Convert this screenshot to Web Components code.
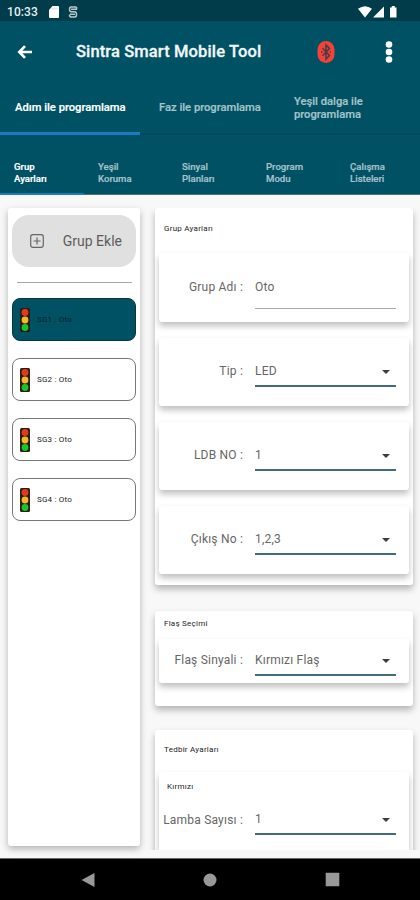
<!DOCTYPE html>
<html lang="tr">
<head>
<meta charset="UTF-8">
<meta name="viewport" content="width=device-width, initial-scale=1.0">
<title>Sintra Smart Mobile Tool</title>
<style>
    body {
        margin: 0;
        width: 420px;
        height: 900px;
        overflow: hidden;
        display: flex;
        flex-direction: column;
        background: #f8f8f8;
        font-family: Roboto, "Liberation Sans", sans-serif;
        color: #555;
    }

    main {
        flex: 1;
        min-height: 0;
        display: flex;
        gap: 15px;
        padding: 13px 7px 0 8px;
    }
</style>
</head>
<body>
    <status-bar></status-bar>
    <app-header>Sintra Smart Mobile Tool</app-header>
    <tab-bar class="main-tabs">
        <tab-item active style="--pad: 15px">Adım ile programlama</tab-item>
        <tab-item style="--pad: 19px">Faz ile programlama</tab-item>
        <tab-item>Yeşil dalga ile<br>programlama</tab-item>
    </tab-bar>
    <tab-bar small>
        <tab-item active>Grup<br>Ayarları</tab-item>
        <tab-item>Yeşil<br>Koruma</tab-item>
        <tab-item>Sinyal<br>Planları</tab-item>
        <tab-item>Program<br>Modu</tab-item>
        <tab-item>Çalışma<br>Listeleri</tab-item>
    </tab-bar>
    <main>
        <group-list>
            <signal-group selected>SG1 : Oto</signal-group>
            <signal-group>SG2 : Oto</signal-group>
            <signal-group>SG3 : Oto</signal-group>
            <signal-group>SG4 : Oto</signal-group>
        </group-list>
        <settings-panel>
            <settings-card heading="Grup Ayarları" style="height: 377px">
                <field-card type="text" label="Grup Adı :">Oto</field-card>
                <field-card label="Tip :">LED</field-card>
                <field-card label="LDB NO :">1</field-card>
                <field-card label="Çıkış No :">1,2,3</field-card>
            </settings-card>
            <settings-card heading="Flaş Seçimi" style="height: 95px; margin-top: 1px; --head: 28px; --head-line: 25px">
                <field-card compact label="Flaş Sinyali :">Kırmızı Flaş</field-card>
            </settings-card>
            <settings-card heading="Tedbir Ayarları" style="height: 200px; margin-top: -1px; --head: 42px; --head-line: 40px">
                <field-card compact heading="Kırmızı" label="Lamba Sayısı :">1</field-card>
            </settings-card>
        </settings-panel>
    </main>
    <nav-bar></nav-bar>

<script>
class StatusBar extends HTMLElement {
    connectedCallback() {
        this.attachShadow({ mode: 'open' });
        this.shadowRoot.innerHTML = `
            <style>
                :host {
                    flex: none;
                    display: flex;
                    align-items: center;
                    box-sizing: border-box;
                    height: 21px;
                    padding: 2px 22px 0 7px;
                    background: #003c4a;
                    color: #e9eff0;
                    font-size: 12px;
                    font-weight: 500;
                    letter-spacing: 0.1px;
                }
                .sd { margin-left: 11px; }
                .app { margin-left: 9px; }
                .signals { margin-left: auto; }
            </style>
            <span>10:33</span>
            <svg class="sd" width="10" height="12" viewBox="0 0 10 12"><path d="M3.500 0H9a1 1 0 0 1 1 1v10a1 1 0 0 1-1 1H1a1 1 0 0 1-1-1V4z" fill="#fff"/><path d="M4 2v2M6 1.500v2M8 1.500v2" stroke="#b7c7cb" stroke-width=".8"/></svg>
            <svg class="app" width="10" height="12" viewBox="0 0 10 12" fill="none" stroke="#b9c7cb" stroke-width="1.500"><path d="M8.500 1H3Q1.500 1 1.500 3.300T3 5.700h4Q8.500 6 8.500 8.500T7 11H3Q1.500 11 1.500 8.500M8.500 1v3"/><path d="M3 3.300h5M2 8.300h5"/></svg>
            <svg class="signals" width="40" height="12" viewBox="0 0 40 12" fill="#fff"><path d="M0 2.800Q7-2.300 14 2.800L7 11.500zM15 11.500 26 .5v11zM32 1.500h1.800V0h3v1.500h1.700v10H32v-10z"/></svg>
        `;
    }
}

class AppHeader extends HTMLElement {
    connectedCallback() {
        this.attachShadow({ mode: 'open' });
        this.shadowRoot.innerHTML = `
            <style>
                :host {
                    flex: none;
                    display: flex;
                    align-items: center;
                    box-sizing: border-box;
                    height: 59px;
                    padding: 2px 27px 0 17px;
                    background: #005163;
                    color: #f2f7f8;
                    font-size: 16.500px;
                    font-weight: 500;
                    letter-spacing: 0.12px;
                    -webkit-text-stroke: 0.3px #f2f7f8;
                }
                .title { margin-left: 44px; flex: 1; white-space: nowrap; }
                .bluetooth { margin-right: 50px; }
            </style>
            <svg width="15" height="14" viewBox="0 0 15 14" fill="none" stroke="#fff" stroke-width="2.600"><path d="M15 7H3M8 1.200 2.300 7 8 12.800"/></svg>
            <span class="title"><slot></slot></span>
            <svg class="bluetooth" width="18" height="24" viewBox="0 0 18 24"><rect x=".5" y="1" width="17" height="22" rx="8.500" fill="#f44336"/><path d="m5.500 8.300 7 7.200L9 19V5l3.500 3.500-7 7.200" fill="none" stroke="#4a3d45" stroke-width="1.600"/><path d="M4 12h1.500M12.500 12H14" stroke="#4a3d45" stroke-width="1.500"/></svg>
            <svg width="8" height="24" viewBox="0 0 8 24" fill="#fff"><circle cx="4" cy="4.500" r="3.300"/><circle cx="4" cy="12" r="3.300"/><circle cx="4" cy="19.500" r="3.300"/></svg>
        `;
    }
}

class TabBar extends HTMLElement {
    connectedCallback() {
        this.attachShadow({ mode: 'open' });
        this.shadowRoot.innerHTML = `
            <style>
                :host {
                    flex: none;
                    display: grid;
                    grid-auto-flow: column;
                    grid-auto-columns: 1fr;
                    height: 55px;
                    background: #005163;
                    box-shadow: inset 0 -2px #00495a;
                    font-size: 11.200px;
                    line-height: 13px;
                    --top: 3px;
                    --line: 3px;
                }
                :host([small]) {
                    height: 60px;
                    font-size: 9.600px;
                    line-height: 11.500px;
                    --top: 17px;
                    --line: 2px;
                    box-shadow: inset 0 -1px #48727b;
                }
            </style>
            <slot></slot>
        `;
    }
}

class TabItem extends HTMLElement {
    connectedCallback() {
        this.attachShadow({ mode: 'open' });
        this.shadowRoot.innerHTML = `
            <style>
                :host {
                    display: flex;
                    align-items: center;
                    box-sizing: border-box;
                    padding: var(--top, 0) 0 0 var(--pad, 14px);
                    border-bottom: var(--line) solid transparent;
                    color: #a6c3ca;
                    font-weight: 500;
                    white-space: nowrap;
                    -webkit-text-stroke: 0.2px;
                }
                :host([active]) {
                    color: #fff;
                    border-color: #1b79c5;
                }
            </style>
            <span><slot></slot></span>
        `;
    }
}

class GroupList extends HTMLElement {
    connectedCallback() {
        this.attachShadow({ mode: 'open' });
        this.shadowRoot.innerHTML = `
            <style>
                :host {
                    flex: none;
                    display: flex;
                    flex-direction: column;
                    box-sizing: border-box;
                    width: 132px;
                    height: 638px;
                    padding: 7px 4px 0;
                    background: #fff;
                    border-radius: 3px;
                    box-shadow: 0 3px 7px rgba(0, 0, 0, 0.28);
                }
                .add {
                    display: flex;
                    align-items: center;
                    height: 52px;
                    padding: 0 14px 0 18px;
                    justify-content: space-between;
                    background: #e0e0e0;
                    border-radius: 17px;
                    font-size: 14px;
                    color: #5c5c5c;
                }
                hr {
                    width: 115px;
                    height: 1px;
                    margin: 15px auto;
                    border: 0;
                    background: #a5a5a5;
                }
                .groups {
                    display: flex;
                    flex-direction: column;
                    gap: 17px;
                }
            </style>
            <div class="add">
                <svg width="14" height="14" viewBox="0 0 14 14" fill="none" stroke="#666" stroke-width="1.200"><rect x=".7" y=".7" width="12.600" height="12.600" rx="2.200"/><path d="M7 3.500v7M3.500 7h7"/></svg>
                <span>Grup Ekle</span>
            </div>
            <hr>
            <div class="groups"><slot></slot></div>
        `;
    }
}

class SignalGroup extends HTMLElement {
    connectedCallback() {
        this.attachShadow({ mode: 'open' });
        this.shadowRoot.innerHTML = `
            <style>
                :host {
                    display: flex;
                    align-items: center;
                    gap: 7px;
                    box-sizing: border-box;
                    height: 43px;
                    padding-left: 7px;
                    border: 1px solid #777;
                    border-radius: 8px;
                    font-size: 8px;
                    letter-spacing: 0.2px;
                    color: #222;
                }
                :host([selected]) {
                    background: #005163;
                    border-color: #0c3440;
                    color: #01222b;
                }
            </style>
            <svg width="10" height="24" viewBox="0 0 10 24"><rect width="10" height="24" rx="1.500" fill="#2a1d14"/><circle cx="5" cy="4.500" r="3.400" fill="#e5391b"/><circle cx="5" cy="12" r="3.400" fill="#f9b52c"/><circle cx="5" cy="19.500" r="3.400" fill="#16c72c"/></svg>
            <span><slot></slot></span>
        `;
    }
}

class SettingsPanel extends HTMLElement {
    connectedCallback() {
        this.attachShadow({ mode: 'open' });
        this.shadowRoot.innerHTML = `
            <style>
                :host {
                    flex: 1;
                    display: flex;
                    flex-direction: column;
                    gap: 25px;
                    height: 642px;
                    overflow: hidden;
                    margin: 0 -7px 0 -12px;
                    padding: 0 7px 0 12px;
                }
            </style>
            <slot></slot>
        `;
    }
}

class SettingsCard extends HTMLElement {
    connectedCallback() {
        this.attachShadow({ mode: 'open' });
        this.shadowRoot.innerHTML = `
            <style>
                :host {
                    flex: none;
                    display: flex;
                    flex-direction: column;
                    box-sizing: border-box;
                    padding: 0 4px;
                    background: #fff;
                    border-radius: 3px;
                    box-shadow: 0 4px 7px rgba(0, 0, 0, 0.28);
                }
                .heading {
                    height: var(--head, 45px);
                    line-height: var(--head-line, 42px);
                    padding-left: 5px;
                    font-size: 8px;
                    letter-spacing: 0.25px;
                    color: #222;
                }
                .fields {
                    display: flex;
                    flex-direction: column;
                    gap: 16px;
                }
            </style>
            <div class="heading">${this.getAttribute('heading')}</div>
            <div class="fields"><slot></slot></div>
        `;
    }
}

class FieldCard extends HTMLElement {
    connectedCallback() {
        const heading = this.getAttribute('heading');
        const isText = this.getAttribute('type') === 'text';
        this.attachShadow({ mode: 'open' });
        this.shadowRoot.innerHTML = `
            <style>
                :host {
                    display: block;
                    box-sizing: border-box;
                    height: 68px;
                    padding: 19px 13px 0 0;
                    background: #fff;
                    border-radius: 3px;
                    box-shadow: 0 4px 6px rgba(0, 0, 0, 0.25);
                    font-size: 12px;
                    color: #666;
                    letter-spacing: 0.2px;
                }
                :host([type="text"]) { height: 69px; padding-top: 20px; }
                :host([compact]) { height: 44px; padding-top: 7px; }
                :host([heading]) { height: 150px; padding-top: 0; }
                .heading {
                    height: 33px;
                    line-height: 29px;
                    padding-left: 8px;
                    font-size: 8px;
                    letter-spacing: 0.25px;
                    color: #222;
                }
                .row {
                    display: grid;
                    grid-template-columns: 84px 141px;
                    column-gap: 12px;
                    line-height: 29px;
                }
                :host([heading]) .row { line-height: 31px; height: 31px; }
                label { text-align: right; white-space: nowrap; }
                .value {
                    box-sizing: border-box;
                    height: 30px;
                    display: flex;
                    align-items: center;
                    justify-content: space-between;
                    padding-right: 6px;
                    border-bottom: 2px solid #3f6c80;
                }
                .value span { margin-top: 1px; }
                .value.text {
                    height: 36px;
                    align-items: flex-start;
                    border-bottom: 1px solid #aaa;
                }
                .value.text span { margin: 0; }
                .value svg { margin-top: 2px; }
            </style>
            ${heading ? `<div class="heading">${heading}</div>` : ''}
            <div class="row">
                <label>${this.getAttribute('label')}</label>
                <div class="value ${isText ? 'text' : ''}">
                    <span><slot></slot></span>
                    ${isText ? '' : '<svg width="8" height="4" viewBox="0 0 8 4"><path d="M0 0h8L4 4z" fill="#3c3c3c"/></svg>'}
                </div>
            </div>
        `;
    }
}

class NavBar extends HTMLElement {
    connectedCallback() {
        this.attachShadow({ mode: 'open' });
        this.shadowRoot.innerHTML = `
            <style>
                :host {
                    flex: none;
                    display: flex;
                    align-items: center;
                    justify-content: space-between;
                    box-sizing: border-box;
                    height: 42px;
                    padding: 0 80px 0 81px;
                    background: #000;
                    border-top: 1px solid #666;
                }
            </style>
            <svg width="14" height="16" viewBox="0 0 14 16"><path d="M13.500 1v14L.5 8z" fill="#999"/></svg>
            <svg width="14" height="14" viewBox="0 0 14 14"><circle cx="7" cy="7" r="6.500" fill="#999"/></svg>
            <svg width="15" height="15" viewBox="0 0 15 15"><rect x=".7" y=".7" width="13.600" height="13.600" rx=".5" fill="#999"/></svg>
        `;
    }
}

customElements.define('status-bar', StatusBar);
customElements.define('app-header', AppHeader);
customElements.define('tab-bar', TabBar);
customElements.define('tab-item', TabItem);
customElements.define('group-list', GroupList);
customElements.define('signal-group', SignalGroup);
customElements.define('settings-panel', SettingsPanel);
customElements.define('settings-card', SettingsCard);
customElements.define('field-card', FieldCard);
customElements.define('nav-bar', NavBar);
</script>
</body>
</html>
